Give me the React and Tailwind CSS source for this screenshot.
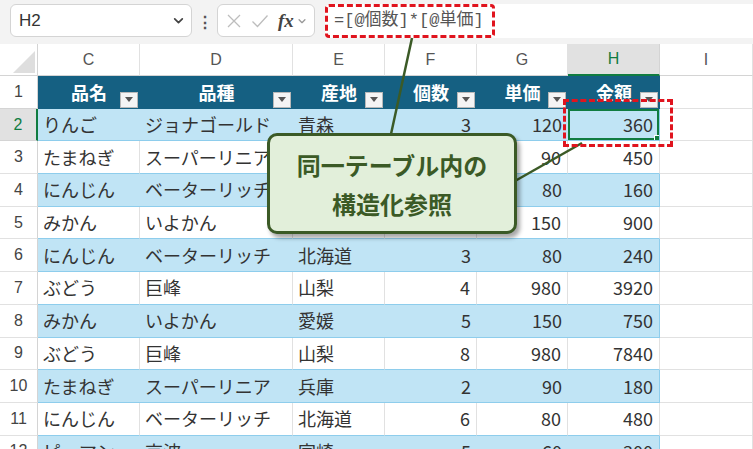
import React from "react";

const rows = [
  ["りんご", "ジョナゴールド", "青森", 3, 120, 360],
  ["たまねぎ", "スーパーリニア", "兵庫", 5, 90, 450],
  ["にんじん", "ベーターリッチ", "北海道", 2, 80, 160],
  ["みかん", "いよかん", "愛媛", 6, 150, 900],
  ["にんじん", "ベーターリッチ", "北海道", 3, 80, 240],
  ["ぶどう", "巨峰", "山梨", 4, 980, 3920],
  ["みかん", "いよかん", "愛媛", 5, 150, 750],
  ["ぶどう", "巨峰", "山梨", 8, 980, 7840],
  ["たまねぎ", "スーパーリニア", "兵庫", 2, 90, 180],
  ["にんじん", "ベーターリッチ", "北海道", 6, 80, 480],
  ["ピーマン", "京波", "宮崎", 5, 60, 300],
];

const headers = ["品名", "品種", "産地", "個数", "単価", "金額"];
const cols = ["C", "D", "E", "F", "G", "H", "I"];

const jp = { fontFamily: '"Noto Sans CJK JP", "Noto Sans", sans-serif' };
const ui = { fontFamily: '"Liberation Sans", "Noto Sans", sans-serif' };

const Chevron = ({ className }) => (
  <svg className={className} viewBox="0 0 12 12" fill="none" stroke="currentColor" strokeWidth={1.6}>
    <path d="M2.5 4.5 6 8l3.5-3.5" strokeLinecap="round" strokeLinejoin="round" />
  </svg>
);

const FilterButton = () => (
  <div className="absolute right-[2px] bottom-[1px] w-[18px] h-[16px] bg-[#f4f4f4] border border-[#b8b8b8] flex items-center justify-center">
    <svg className="w-[8px] h-[5px]" viewBox="0 0 8 5">
      <path d="M0 0h8L4 5z" fill="#555" />
    </svg>
  </div>
);

export default function App() {
  return (
    <div className="relative w-[753px] h-[449px] overflow-hidden bg-white" style={jp}>
      {/* Formula bar */}
      <div className="h-[44px] bg-[#f3f3f3] flex items-start pt-[4px] pl-[10px]">
        <div className="w-[182px] h-[33px] bg-white border border-[#d4d4d4] rounded-[6px] flex items-center justify-between pl-[8px] pr-[6px]">
          <span className="text-[17px] text-[#333]" style={ui}>H2</span>
          <Chevron className="w-[13px] h-[13px] text-[#444]" />
        </div>
        <div className="w-[25px] h-[33px] flex items-center justify-center text-[#555] text-[16px] font-bold">⋮</div>
        <div className="w-[98px] h-[33px] bg-white border border-[#d4d4d4] rounded-[6px] flex items-center pl-[8px] gap-[9px]">
          <svg className="w-[16px] h-[16px]" viewBox="0 0 16 16" stroke="#bdbdbd" strokeWidth={1.3}>
            <path d="M2 2l12 12M14 2 2 14" />
          </svg>
          <svg className="w-[18px] h-[16px]" viewBox="0 0 18 16" fill="none" stroke="#bdbdbd" strokeWidth={1.3}>
            <path d="M1.5 8.5 6.5 13.5 16.5 2.5" />
          </svg>
          <span className="text-[19px] italic font-bold text-[#444] leading-none" style={{ fontFamily: '"Liberation Serif", serif' }}>fx</span>
          <Chevron className="w-[10px] h-[10px] text-[#999] -ml-[6px]" />
        </div>
        <div className="ml-[10px] flex-1 h-[34px] bg-white rounded-l-[6px]">
          <div className="w-[170px] h-[34px] border-[3px] border-dashed border-[#e0141e] rounded-[4px] flex items-center pl-[6px]">
            <span className="text-[17px] text-[#555]" style={{ fontFamily: '"Liberation Mono", "Noto Sans CJK JP", monospace' }}>
              =[@個数]*[@単価]
            </span>
          </div>
        </div>
      </div>

      {/* Sheet grid */}
      <div className="grid grid-cols-[38px_102px_153px_92px_92px_91px_92px_93px]">
        {/* column headers */}
        <div className="h-[32px] border-r border-b border-[#d4d4d4] flex items-end justify-end">
          <svg className="w-[22px] h-[22px] mb-[2px] mr-[2px]" viewBox="0 0 22 22">
            <path d="M22 0v22H0z" fill="#dedede" />
          </svg>
        </div>
        {cols.map((c) => (
          <div
            key={c}
            className={
              c === "H"
                ? "h-[32px] bg-[#e1e1e1] border-b-2 border-[#107c41] border-r border-r-[#d4d4d4] flex items-center justify-center text-[16px] text-[#107c41]"
                : "h-[32px] border-r border-b border-[#e1e1e1] border-b-[#d4d4d4] flex items-center justify-center text-[16px] text-[#555]"
            }
            style={ui}
          >
            {c}
          </div>
        ))}

        {/* table header row */}
        <div className="h-[32.7px] border-r border-b border-[#d4d4d4] flex items-center justify-center text-[16px] text-[#444]" style={ui}>1</div>
        {headers.map((h) => (
          <div key={h} className="relative h-[32.7px] bg-[#156082] flex items-center justify-center text-[18px] font-bold text-white">
            {h}
            <FilterButton />
          </div>
        ))}
        <div className="h-[32.7px] border-r border-b border-[#e1e1e1]" />

        {/* data rows */}
        {rows.map((r, i) => {
          const n = i + 2;
          const blue = i % 2 === 0;
          const sel = n === 2;
          const cell = blue
            ? "bg-[#c0e4f5] border-b border-[#8ecdec]"
            : "bg-white border-b border-[#8ecdec] border-r border-r-[#e1e1e1]";
          return (
            <React.Fragment key={n}>
              <div
                className={
                  sel
                    ? "h-[32.7px] bg-[#e1e1e1] border-r-2 border-[#107c41] border-b border-b-[#d4d4d4] flex items-center justify-center text-[16px] text-[#107c41]"
                    : "h-[32.7px] border-r border-b border-[#d4d4d4] border-b-[#e1e1e1] flex items-center justify-center text-[16px] text-[#444]"
                }
                style={ui}
              >
                {n}
              </div>
              {r.map((v, j) => {
                const num = j >= 3;
                const last = j === 5;
                return (
                  <div
                    key={j}
                    className={`relative h-[32.7px] flex items-center text-[18px] text-[#333] whitespace-nowrap overflow-hidden ${cell} ${
                      num ? "justify-end pr-[6px]" : "pl-[5px]"
                    } ${last ? "border-r border-r-[#8ecdec]" : ""}`}
                  >
                    {v}
                    {sel && last && (
                      <div className="absolute inset-0 border-2 border-[#107c41]">
                        <div className="absolute -right-[4px] -bottom-[4px] w-[7px] h-[7px] bg-[#107c41] border border-white" />
                      </div>
                    )}
                  </div>
                );
              })}
              <div className="h-[32.7px] border-r border-b border-[#e1e1e1]" />
            </React.Fragment>
          );
        })}
      </div>

      {/* connector lines */}
      <svg className="absolute inset-0 w-[753px] h-[449px] pointer-events-none" viewBox="0 0 753 449">
        <line x1="412" y1="38" x2="391" y2="134" stroke="#3b5a26" strokeWidth="2.5" />
        <line x1="515" y1="181" x2="582" y2="143" stroke="#3b5a26" strokeWidth="2.5" />
      </svg>

      {/* red dashed box around H2 */}
      <div className="absolute left-[563px] top-[99px] w-[110px] h-[48px] border-[3px] border-dashed border-[#e0141e]" />

      {/* callout */}
      <div className="absolute left-[267px] top-[133px] w-[250px] h-[101px] bg-[#e2efda] border-[3px] border-[#3b5a26] rounded-[10px] shadow-[3px_4px_4px_rgba(0,0,0,0.35)] flex flex-col items-center justify-center">
        <div className="text-[24px] font-bold text-[#3b5a26] leading-[39px]">同一テーブル内の</div>
        <div className="text-[24px] font-bold text-[#3b5a26] leading-[39px]">構造化参照</div>
      </div>
    </div>
  );
}
